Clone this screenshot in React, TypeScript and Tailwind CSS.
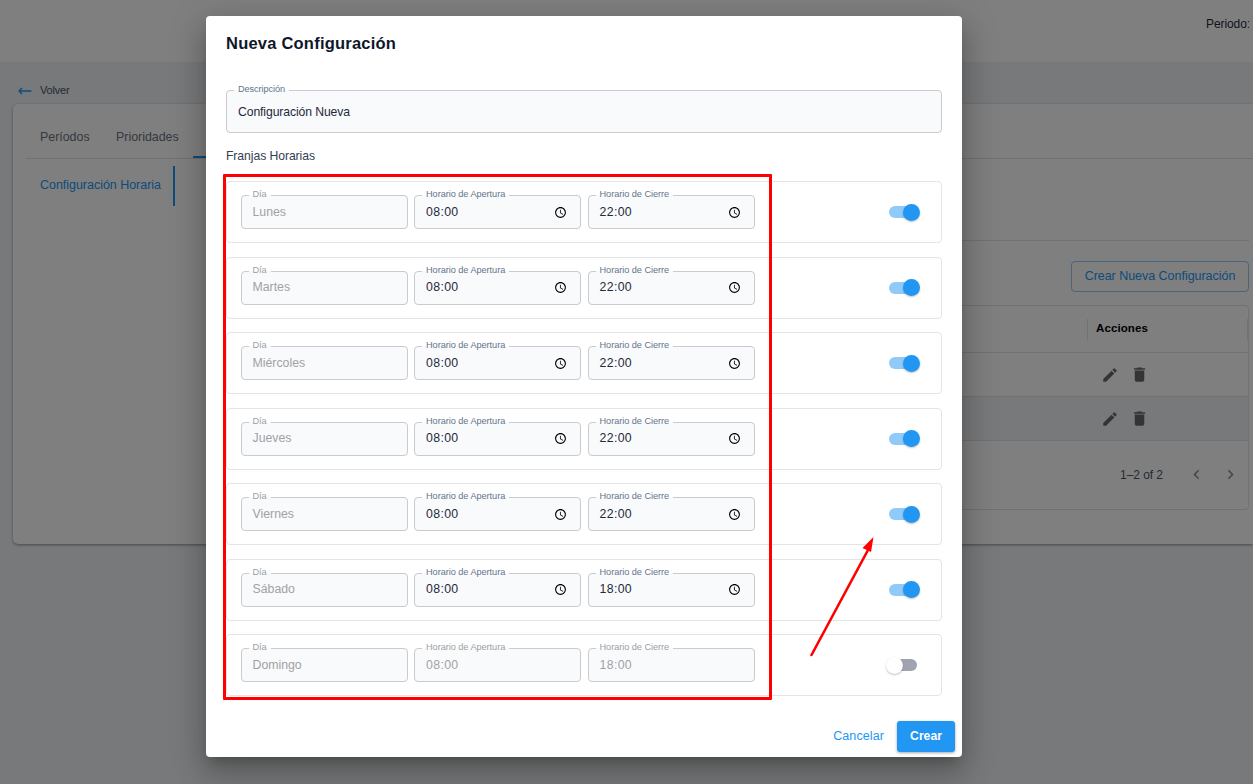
import React from 'react';
import { MdChevronLeft, MdChevronRight, MdDelete, MdEdit, MdSchedule } from 'react-icons/md';
import { HiOutlineArrowNarrowLeft } from 'react-icons/hi';

interface Slot {
  day: string;
  open: string;
  close: string;
  active: boolean;
}

const slots: Slot[] = [
  { day: 'Lunes', open: '08:00', close: '22:00', active: true },
  { day: 'Martes', open: '08:00', close: '22:00', active: true },
  { day: 'Miércoles', open: '08:00', close: '22:00', active: true },
  { day: 'Jueves', open: '08:00', close: '22:00', active: true },
  { day: 'Viernes', open: '08:00', close: '22:00', active: true },
  { day: 'Sábado', open: '08:00', close: '18:00', active: true },
  { day: 'Domingo', open: '08:00', close: '18:00', active: false },
];

interface FieldProps {
  label: string;
  value: string;
  disabled?: boolean;
  time?: boolean;
}

const Field: React.FC<FieldProps> = ({ label, value, disabled, time }) => (
  <fieldset className="-mt-[5px] h-[39px] w-[167px] min-w-0 rounded-[4px] border border-[#c8cbcf] bg-[#f9fafc] pr-[13px] pl-[7px]">
    <legend
      className={`h-[11px] px-1 text-[9.2px] leading-[8px] tracking-[-0.05px] whitespace-nowrap ${disabled ? 'text-[#9c9fa3]' : 'text-[#64748b]'}`}
    >
      {label}
    </legend>
    <div className="flex h-[22px] items-center justify-between pl-1">
      <span
        className={`text-[12.3px] ${time ? 'tracking-[0.35px]' : ''} ${disabled ? 'text-[#a0a2a5]' : 'text-[#1e293b]'}`}
      >
        {value}
      </span>
      {time && !disabled && <MdSchedule className="h-[13px] w-[13px] text-black" />}
    </div>
  </fieldset>
);

const Toggle: React.FC<{ on: boolean }> = ({ on }) => (
  <div className={`relative h-[12px] w-[28px] rounded-full ${on ? 'bg-[#90caf9]' : 'bg-[#a0a3b0]'}`}>
    <span
      className={`absolute -top-[2.5px] h-[17px] w-[17px] rounded-full shadow-[0_1px_2px_rgba(0,0,0,0.25)] ${on ? 'left-[14px] bg-[#2196f3]' : '-left-[3px] bg-white'}`}
    />
  </div>
);

const RowActions: React.FC = () => (
  <div className="flex w-[161px] items-center gap-[11px] pl-[14px] text-[#696969]">
    <MdEdit className="h-[18px] w-[18px]" />
    <MdDelete className="h-[19px] w-[19px]" />
  </div>
);

const Background: React.FC = () => (
  <div className="h-[784px] bg-[#eff2f5]">
    <header className="flex h-[62px] justify-end bg-white pt-[15px] pr-[3px]">
      <span className="text-[12px] tracking-[-0.1px] text-[#1e293b]">Periodo:</span>
    </header>

    <div className="flex h-[42px] items-center gap-[7px] pt-[15px] pl-[17px]">
      <HiOutlineArrowNarrowLeft className="h-4 w-4 text-[#2196f3]" />
      <span className="text-[11px] tracking-[-0.2px] text-[#475569]">Volver</span>
    </div>

    <main className="ml-[13px] h-[440px] rounded-l-[5px] bg-white shadow-[0_1px_3px_rgba(0,0,0,0.4)]">
      <nav className="ml-[13px] flex h-[55px] border-b border-[#dfe1e4] text-[12.4px] text-[#6b7280]">
        <span className="w-[77px] pt-[24px] pl-[14px]">Períodos</span>
        <span className="w-[90px] pt-[24px] pl-[13px]">Prioridades</span>
        <span className="h-[54px] w-[120px] border-b-2 border-[#2196f3]" />
      </nav>

      <div className="flex h-[385px]">
        <aside className="mt-[7px] ml-[27px] flex h-[40px] w-[135px] items-center border-r-2 border-[#2196f3] pb-[2px] text-[12.5px] tracking-[-0.03px] whitespace-nowrap text-[#2196f3]">
          Configuración Horaria
        </aside>

        <section className="mr-1 ml-12 flex flex-1 flex-col">
          <div className="h-[82px] border-b border-[#e2e5e9]" />
          <button className="mt-[20px] h-[31px] w-[178px] self-end rounded-[4px] border border-[#90caf9] text-[12.5px] tracking-[-0.03px] whitespace-nowrap text-[#2196f3]">
            Crear Nueva Configuración
          </button>

          <div className="mt-[13px] h-[205px] rounded-[4px] border border-[#e0e2e5]">
            <div className="flex h-[47px] items-center justify-end border-b border-[#e0e2e5]">
              <div className="flex h-[21px] w-[161px] items-center border-x border-[#e4e4e4] pl-2 text-[11.5px] font-bold tracking-[0.1px] text-black">
                Acciones
              </div>
            </div>
            <div className="flex h-[44px] justify-end border-b border-[#e0e2e5]">
              <RowActions />
            </div>
            <div className="flex h-[44px] justify-end border-b border-[#e0e2e5] bg-[#eff2f5]">
              <RowActions />
            </div>
            <div className="flex h-[67px] items-center justify-end pr-[8px]">
              <span className="text-[12px] tracking-[-0.05px] text-[#475569]">1–2 of 2</span>
              <MdChevronLeft className="ml-[24px] h-[19px] w-[19px] text-[#8a8d92]" />
              <MdChevronRight className="ml-[15px] h-[19px] w-[19px] text-[#8a8d92]" />
            </div>
          </div>
        </section>
      </div>
    </main>
  </div>
);

const Dialog: React.FC = () => (
  <div className="h-[741px] w-[756px] rounded-[4px] bg-white px-5 shadow-[0_8px_11px_-5px_rgba(0,0,0,0.22),0_18px_29px_2px_rgba(0,0,0,0.15),0_7px_35px_6px_rgba(0,0,0,0.13)]">
    <h2 className="h-[69px] pt-[15px] text-[16.5px] font-bold tracking-[0.22px] text-[#0f172a]">
      Nueva Configuración
    </h2>

    <fieldset className="h-[48px] w-[716px] rounded-[4px] border border-[#c8cbcf] bg-[#f9fafc] pl-[7px]">
      <legend className="h-[11px] px-1 text-[9.2px] leading-[8px] tracking-[-0.1px] text-[#64748b]">Descripción</legend>
      <div className="flex h-[32px] items-center pl-1 text-[12.2px] tracking-[-0.1px] text-[#1e293b]">
        Configuración Nueva
      </div>
    </fieldset>

    <h3 className="h-[48px] pt-[14px] text-[12.2px] tracking-[-0.07px] text-[#334155]">Franjas Horarias</h3>

    <div className="flex flex-col gap-[13.5px]">
      {slots.map((slot) => (
        <div
          key={slot.day}
          className="flex h-[62px] items-center rounded-[4px] border border-[#e3e4e6] pr-[24px] pl-[13.5px]"
        >
          <div className="flex flex-1 gap-[6.5px]">
            <Field label="Día" value={slot.day} disabled />
            <Field label="Horario de Apertura" value={slot.open} disabled={!slot.active} time />
            <Field label="Horario de Cierre" value={slot.close} disabled={!slot.active} time />
          </div>
          <Toggle on={slot.active} />
        </div>
      ))}
    </div>

    <div className="-mr-[13px] mt-[24.5px] flex items-center justify-end gap-[13px] text-[12.5px]">
      <button className="tracking-[0.1px] text-[#2196f3]">Cancelar</button>
      <button className="h-[31px] w-[58px] rounded-[3px] bg-[#2196f3] text-[12.2px] font-bold text-white shadow-[0_1px_3px_rgba(0,0,0,0.35)]">
        Crear
      </button>
    </div>
  </div>
);

const App: React.FC = () => {
  return (
    <div className="relative h-[784px] w-full overflow-hidden font-['Liberation_Sans',Arial,sans-serif]">
      <Background />
      <div className="absolute inset-0 bg-black/50 pt-4 pl-[206px]">
        <Dialog />
      </div>

      {/* Annotations */}
      <div className="absolute top-[174px] left-[223px] h-[526px] w-[549px] rounded-[1px] border-3 border-[#ff0000]" />
      <svg className="absolute top-[530px] left-[800px]" width="90" height="135" viewBox="0 0 90 135">
        <path d="M11.5 125L68 20" stroke="#ff0000" strokeWidth="2.6" strokeLinecap="round" />
        <path d="M73.5 7L62.5 18L71 22Z" fill="#ff0000" />
      </svg>
    </div>
  );
};

export default App;
